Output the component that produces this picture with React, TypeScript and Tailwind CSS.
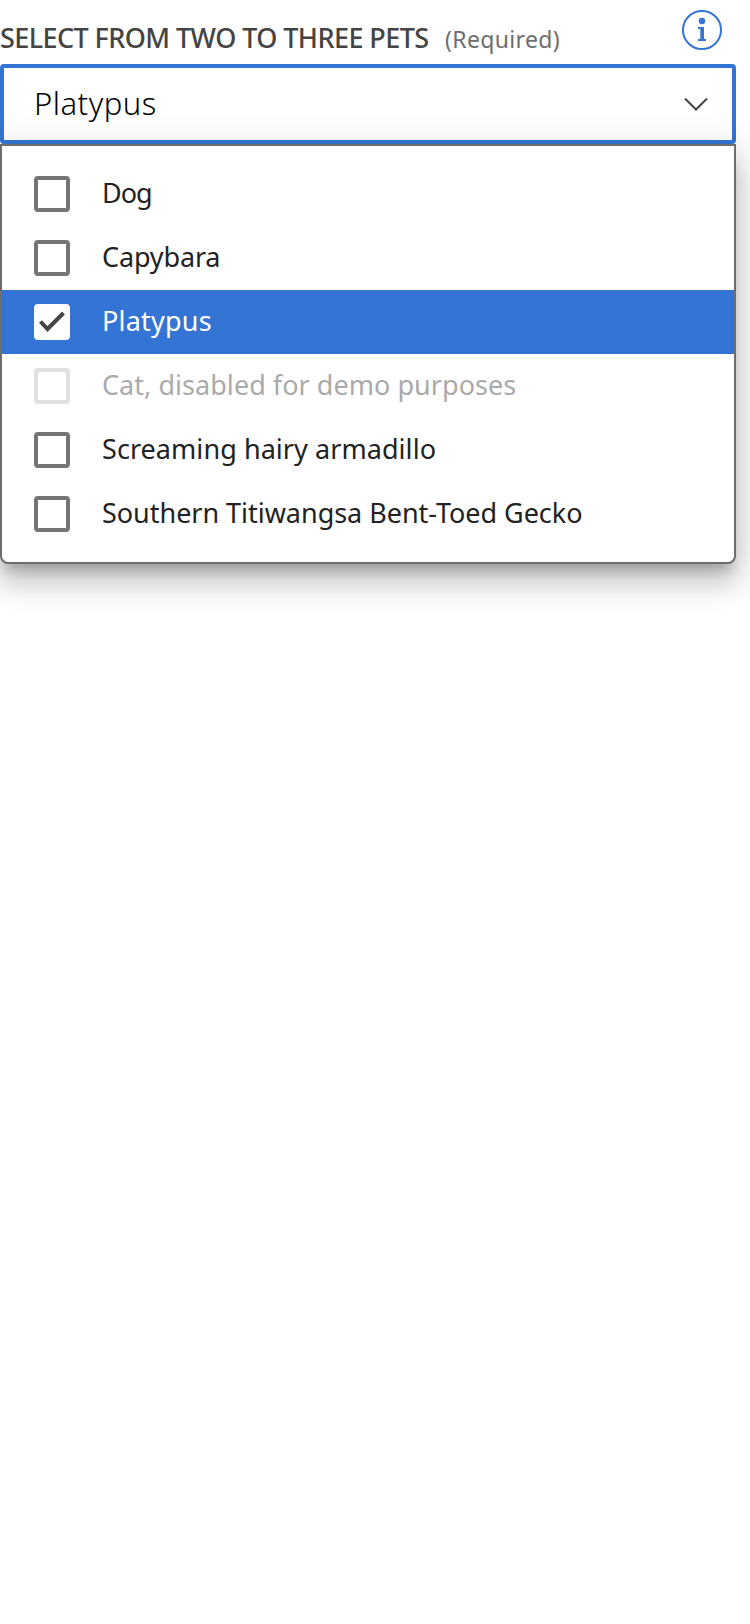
const options = [
  { label: "Dog", tracking: "tracking-[-1px]" },
  { label: "Capybara", tracking: "tracking-[-0.15px]" },
  { label: "Platypus", tracking: "tracking-[0.2px]", checked: true },
  { label: "Cat, disabled for demo purposes", tracking: "tracking-[0.04px]", disabled: true },
  { label: "Screaming hairy armadillo", tracking: "tracking-[0.06px]" },
  { label: "Southern Titiwangsa Bent-Toed Gecko", tracking: "tracking-[-0.03px]" },
];

function Check() {
  return (
    <svg viewBox="0 0 36 36" className="size-9" fill="none" stroke="#444" strokeWidth="4">
      <path d="M6.5 17.5 13.5 25 29.5 9" />
    </svg>
  );
}

export default function App() {
  return (
    <div className="min-h-[1624px] w-[750px] overflow-hidden bg-white font-['Noto_Sans',sans-serif]">
      <div className="w-[736px]">
        <div className="flex h-16 items-start justify-between pr-[14px]">
          <div className="flex items-baseline pt-[18px] whitespace-nowrap">
            <span className="w-[445px] text-[27px] leading-[40px] font-medium tracking-[-0.58px] text-[#444]">
              SELECT FROM TWO TO THREE PETS
            </span>
            <span className="text-[23px] leading-[40px] tracking-[0.35px] text-[#6e6e6e]">(Required)</span>
          </div>
          <svg viewBox="0 0 40 40" className="mt-[10px] size-10" fill="#3474d4">
            <circle cx="20" cy="20" r="19" fill="none" stroke="#3474d4" strokeWidth="2" />
            <circle cx="20" cy="11" r="3.2" />
            <path d="M16 17h6v12h2v2h-8v-2h2.3V19H16z" />
          </svg>
        </div>
        <div className="flex h-20 items-center justify-between rounded-[4px] border-4 border-[#3474d4] pr-6 pl-[30px]">
          <span className="pb-[2px] text-[31px] leading-[40px] font-light tracking-[0.5px] text-black">Platypus</span>
          <svg viewBox="0 0 24 14" className="h-[14px] w-6" fill="none" stroke="#444" strokeWidth="2">
            <path d="M1 1.5 12 12.5 23 1.5" />
          </svg>
        </div>
        <ul className="rounded-b-[8px] border-2 border-[#6e6e6e] bg-white py-4 shadow-[0_12px_12px_-6px_rgba(0,0,0,0.2),0_20px_28px_2px_rgba(0,0,0,0.14),0_8px_36px_6px_rgba(0,0,0,0.12)]">
          {options.map((o) => (
            <li
              key={o.label}
              className={`flex h-16 items-center pl-8 ${o.checked ? "bg-[#3474d4] text-white" : o.disabled ? "text-[#aaa]" : "text-[#222]"}`}
            >
              <span
                className={`size-9 shrink-0 rounded-[4px] bg-white ${o.checked ? "" : o.disabled ? "border-4 border-[#e0e0e0]" : "border-4 border-[#757575]"}`}
              >
                {o.checked && <Check />}
              </span>
              <span className={`ml-8 pb-[2px] text-[27px] leading-[40px] whitespace-nowrap ${o.tracking}`}>{o.label}</span>
            </li>
          ))}
        </ul>
      </div>
    </div>
  );
}
